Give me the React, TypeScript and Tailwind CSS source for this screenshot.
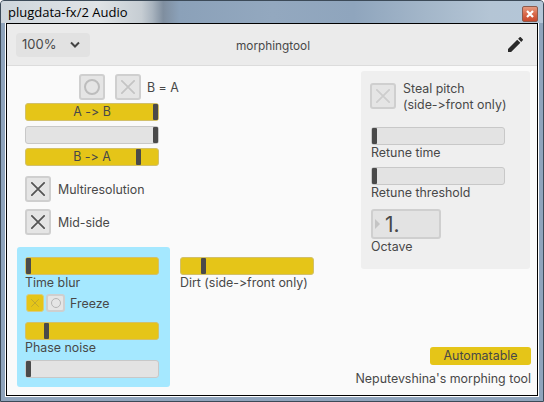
import React from "react";

const font = "font-['Inter','Liberation_Sans',sans-serif] [font-feature-settings:'calt'_0,'liga'_0]";

function Slider({ pos, on, label, className = "" }: { pos: number; on?: boolean; label?: string; className?: string }) {
  return (
    <div
      className={`relative h-[18px] w-[134px] rounded-[3px] border flex items-center justify-center pt-px text-[12.4px] leading-none ${
        on ? "bg-[#e5c518] border-[#d2c06a]" : "bg-[#e3e3e3] border-[#c8c8c8]"
      } ${className}`}
    >
      {label}
      <div className="absolute top-0 bottom-0 w-[5px] bg-[#4a4a4a] rounded-[1px]" style={{ left: pos }} />
    </div>
  );
}

function XIcon({ size, color, w = 2 }: { size: number; color: string; w?: number }) {
  return (
    <svg width={size} height={size} viewBox="0 0 16 16">
      <path d="M1 1L15 15M15 1L1 15" stroke={color} strokeWidth={w} strokeLinecap="round" />
    </svg>
  );
}

function Box({ children, className = "" }: { children: React.ReactNode; className?: string }) {
  return (
    <div className={`flex items-center justify-center w-[26px] h-[26px] shrink-0 rounded-[3px] border-2 border-[#cfcfcf] bg-[#e5e5e5] ${className}`}>
      {children}
    </div>
  );
}

function Label({ children, className = "" }: { children: React.ReactNode; className?: string }) {
  return <div className={`text-[12.4px] leading-[16px] whitespace-nowrap ${className}`}>{children}</div>;
}

export default function App() {
  return (
    <div className={`${font} w-[544px] h-[402px] flex flex-col border border-[#3c4a58] rounded-t-[4px] bg-[#8fa4bc] text-[#484848] overflow-hidden`}>
      <div className="h-[23px] -mx-px -mt-px pt-px px-px shrink-0 flex items-center justify-between bg-[linear-gradient(90deg,#cfd6dc_0%,#dfe3e6_18%,#c6cdd3_26%,#a9b4bf_28%,#7f8e9f_30%,#8ba1b9_33%,#93a8bf_50%,#8fa5bd_65%,#a3b6c9_78%,#b4c5d5_90%,#b4c6d8_100%)]">
        <div className="pl-[7px] text-[13px] leading-none text-black font-['Open_Sans','Liberation_Sans',sans-serif]">plugdata-fx/2 Audio</div>
        <div className="mr-[5px] mt-[3px] w-[16px] h-[16px] flex items-center justify-center rounded-[2px] border border-[#8d5a4c] bg-[linear-gradient(180deg,#e59a80_0%,#d9694a_50%,#c8482c_100%)]">
          <svg width="8" height="8" viewBox="0 0 8 8">
            <path d="M1 1L7 7M7 1L1 7" stroke="#ffffff" strokeWidth="2.2" />
          </svg>
        </div>
      </div>

      <div className="mx-[4px] mb-[4px] flex-1 flex flex-col border-x border-b border-white min-h-0">
        <div className="flex-1 flex flex-col border border-black bg-[#fafafa] min-h-0">
          <div className="relative h-[42px] shrink-0 flex items-center justify-between bg-[#ebebeb] border-b border-[#dcdcdc] pl-[9px] pr-[14px]">
            <div className="w-[74px] h-[24px] flex items-center justify-between rounded-[4px] bg-[#e2e2e2] pl-[6px] pr-[10px] text-[13px]">
              <span>100%</span>
              <svg width="10" height="8" viewBox="0 0 10 8">
                <path d="M1 1.5L5 5.5L9 1.5" fill="none" stroke="#444444" strokeWidth="2" />
              </svg>
            </div>
            <div className="absolute left-[229px] top-[14px] text-[11.8px] leading-[16px]">morphingtool</div>
            <svg width="15" height="15" viewBox="3 3 18 18">
              <path fill="#2a2a2a" d="M3 17.25V21h3.75L17.81 9.94l-3.75-3.75L3 17.25zM20.71 7.04a1 1 0 0 0 0-1.41l-2.34-2.34a1 1 0 0 0-1.41 0l-1.83 1.83 3.75 3.75 1.83-1.83z" />
            </svg>
          </div>

          <div className="flex-1 flex min-h-0">
            <div className="ml-[10px] w-[153px] flex flex-col">
              <div className="pl-[8px] flex flex-col">
                <div className="mt-[8px] pl-[54px] flex items-center whitespace-nowrap">
                  <Box>
                    <div className="w-[16px] h-[16px] rounded-full border-2 border-[#bdbdbd]" />
                  </Box>
                  <Box className="ml-[10px]">
                    <XIcon size={14} color="#c4c4c4" />
                  </Box>
                  <span className="ml-[6px] pt-[2px] text-[12.4px]">B = A</span>
                </div>
                <Slider className="mt-[3px]" on pos={127} label="A -> B" />
                <Slider className="mt-[5px]" pos={127} />
                <Slider className="mt-[4px]" on pos={110} label="B -> A" />
                <div className="mt-[10px] flex items-center">
                  <Box><XIcon size={14} color="#555555" /></Box>
                  <span className="ml-[7px] pt-[2px] text-[12.4px]">Multiresolution</span>
                </div>
                <div className="mt-[7px] flex items-center">
                  <Box><XIcon size={14} color="#555555" /></Box>
                  <span className="ml-[7px] pt-[2px] text-[12.4px]">Mid-side</span>
                </div>
              </div>

              <div className="mt-[12px] h-[140px] rounded-[3px] bg-[#a5e8ff] pl-[8px] pt-[10px] flex flex-col">
                <Slider on pos={0} />
                <Label>Time blur</Label>
                <div className="mt-[3px] h-[18px] pl-[1px] flex items-center">
                  <div className="w-[18px] h-[18px] flex items-center justify-center rounded-[3px] border border-[#d8cc80] bg-[#e5c518]">
                    <XIcon size={8} color="#c2a92c" />
                  </div>
                  <div className="ml-[2px] w-[19px] h-[18px] flex items-center justify-center rounded-[3px] border-2 border-[#cfcfcf] bg-[#e5e5e5]">
                    <div className="w-[10px] h-[10px] rounded-full border border-[#b5b5b5]" />
                  </div>
                  <span className="ml-[5px] pt-[2px] text-[12.4px]">Freeze</span>
                </div>
                <Slider className="mt-[10px]" on pos={18} />
                <Label>Phase noise</Label>
                <Slider className="mt-[4px]" pos={0} />
              </div>
            </div>

            <div className="ml-[10px] w-[134px] pt-[191px]">
              <Slider on pos={20} />
              <Label>Dirt (side-&gt;front only)</Label>
            </div>

            <div className="ml-auto mr-[6px] w-[176px] flex flex-col items-end">
              <div className="mt-[5px] mr-px w-[169px] h-[198px] rounded-[3px] bg-[#efefef] pl-[10px] pt-[12px]">
                <div className="-ml-px flex">
                  <Box>
                    <XIcon size={14} color="#cdcdcd" />
                  </Box>
                  <div className="ml-[7px] -mt-[2px] text-[12.4px] leading-[16px] whitespace-nowrap">
                    Steal pitch
                    <br />
                    (side-&gt;front only)
                  </div>
                </div>
                <Slider className="mt-[14px]" pos={0} />
                <Label>Retune time</Label>
                <Slider className="mt-[6px]" pos={0} />
                <Label>Retune threshold</Label>
                <div className="mt-[8px] w-[70px] h-[30px] rounded-[3px] border-2 border-[#cfcfcf] bg-[#e3e3e3] flex items-center pl-[2px]">
                  <div className="w-0 h-0 border-y-[5px] border-y-transparent border-l-[5px] border-l-[#c4c4c4]" />
                  <span className="ml-[5px] text-[21px] leading-none">1.</span>
                </div>
                <Label>Octave</Label>
              </div>
              <div className="mt-auto w-[101px] h-[18px] rounded-[3px] bg-[#e5c518] flex items-center justify-center text-[12.4px] leading-none">
                Automatable
              </div>
              <div className="mt-[6px] mb-[8px] text-[12.4px] leading-[16px] whitespace-nowrap">Neputevshina&apos;s morphing tool</div>
            </div>
          </div>
        </div>
      </div>
    </div>
  );
}
